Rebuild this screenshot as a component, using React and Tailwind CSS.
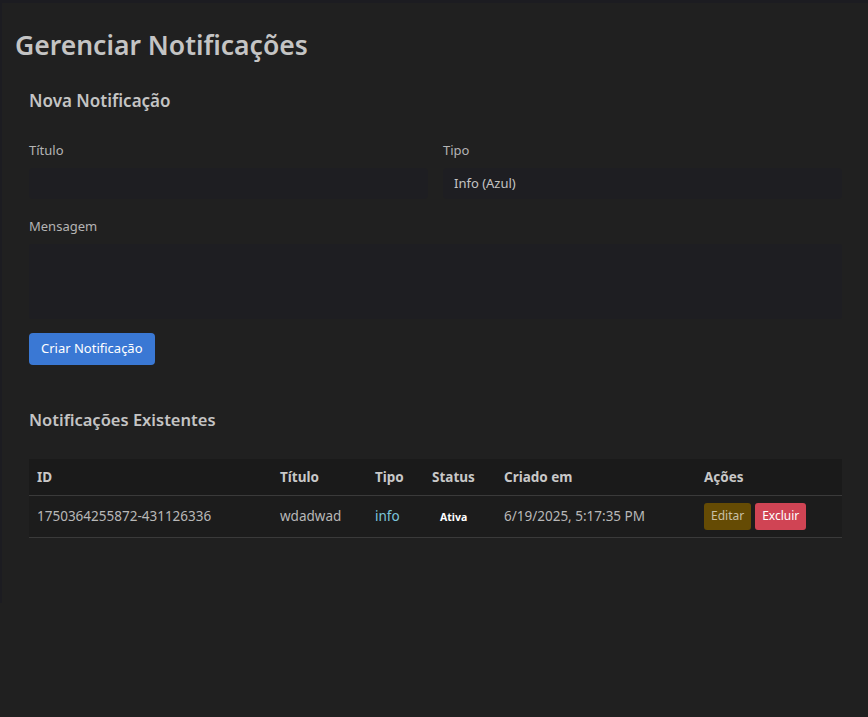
import { useState } from 'react'

const notifications = [
  {
    id: '1750364255872-431126336',
    title: 'wdadwad',
    type: 'info',
    active: true,
    createdAt: '6/19/2025, 5:17:35 PM',
  },
]

export default function App() {
  const [title, setTitle] = useState('')
  const [type, setType] = useState('info')
  const [message, setMessage] = useState('')

  return (
    <div
      className="min-h-[717px] bg-[#202020] text-[#c4c4c4]"
      style={{ fontFamily: '"Noto Sans", "Open Sans", sans-serif' }}
    >
      <div className="h-[3px] bg-[#1c1c21]" />
      <div className="h-[600px] border-l-2 border-[#1c1c21] pl-[13px] pr-[12px]">
        <h1 className="pt-[24px] text-[26.5px] leading-[36px] font-semibold text-[#c4c4c4]">
          Gerenciar Notificações
        </h1>

        <section className="px-[14px] pt-[25px]">
          <h2 className="text-[17px] leading-[26px] font-semibold text-[#c4c4c4]">
            Nova Notificação
          </h2>

          <div className="mt-[26px] grid grid-cols-2 gap-[15px]">
            <label className="block">
              <span className="block text-[13px] leading-[20px] text-[#b4b4b4]">Título</span>
              <input
                type="text"
                value={title}
                onChange={(e) => setTitle(e.target.value)}
                className="mt-[8px] block h-[31px] w-full rounded-[4px] bg-[#1e1e22] px-[11px] text-[13px] text-[#c4c4c4] outline-none"
              />
            </label>
            <label className="block">
              <span className="block text-[13px] leading-[20px] text-[#b4b4b4]">Tipo</span>
              <select
                value={type}
                onChange={(e) => setType(e.target.value)}
                className="mt-[8px] block h-[31px] w-full appearance-none rounded-[4px] bg-[#1e1e22] px-[11px] text-[13px] text-[#c4c4c4] outline-none"
              >
                <option value="info">Info (Azul)</option>
                <option value="warning">Aviso (Amarelo)</option>
                <option value="error">Erro (Vermelho)</option>
              </select>
            </label>
          </div>

          <label className="mt-[17px] block">
            <span className="block text-[13px] leading-[20px] text-[#b4b4b4]">Mensagem</span>
            <textarea
              value={message}
              onChange={(e) => setMessage(e.target.value)}
              className="mt-[8px] block h-[75px] w-full resize-none rounded-[2px] bg-[#1e1e22] px-[11px] py-[6px] text-[13px] text-[#c4c4c4] outline-none"
            />
          </label>

          <button
            type="button"
            className="mt-[14px] h-[32px] rounded-[4px] bg-[#3a78d4] px-[12px] text-[13px] text-white"
          >
            Criar Notificação
          </button>

          <h2 className="mt-[42px] text-[16.5px] leading-[26px] font-semibold text-[#c4c4c4]">
            Notificações Existentes
          </h2>

          <table className="mt-[26px] w-full border-collapse text-[13.5px]">
            <thead>
              <tr className="bg-[#1a1a1a] text-left text-[#c8c8c8]">
                <th className="h-[36px] w-[243px] border-b border-[#3a3a3a] px-[8px] font-bold">ID</th>
                <th className="w-[95px] border-b border-[#3a3a3a] px-[8px] font-bold">Título</th>
                <th className="w-[57px] border-b border-[#3a3a3a] px-[8px] font-bold">Tipo</th>
                <th className="w-[72px] border-b border-[#3a3a3a] px-[8px] font-bold">Status</th>
                <th className="w-[200px] border-b border-[#3a3a3a] px-[8px] font-bold">Criado em</th>
                <th className="border-b border-[#3a3a3a] px-[8px] font-bold">Ações</th>
              </tr>
            </thead>
            <tbody>
              {notifications.map((n) => (
                <tr key={n.id} className="bg-[#1c1c1c] text-[#b8b8b8]">
                  <td className="h-[42px] border-b border-[#3a3a3a] px-[8px]">{n.id}</td>
                  <td className="border-b border-[#3a3a3a] px-[8px]">{n.title}</td>
                  <td className="border-b border-[#3a3a3a] px-[8px] text-[#7cc6dc]">{n.type}</td>
                  <td className="border-b border-[#3a3a3a] px-[8px]">
                    <span className="px-[8px] text-[10.5px] font-bold text-white">
                      {n.active ? 'Ativa' : 'Inativa'}
                    </span>
                  </td>
                  <td className="border-b border-[#3a3a3a] px-[8px]">{n.createdAt}</td>
                  <td className="border-b border-[#3a3a3a] px-[8px]">
                    <div className="flex gap-[4px]">
                      <button
                        type="button"
                        className="h-[27px] rounded-[3px] bg-[#654b04] px-[7px] text-[12px] text-[#c9c0a8]"
                      >
                        Editar
                      </button>
                      <button
                        type="button"
                        className="h-[27px] rounded-[3px] bg-[#d04454] px-[7px] text-[12px] text-white"
                      >
                        Excluir
                      </button>
                    </div>
                  </td>
                </tr>
              ))}
            </tbody>
          </table>
        </section>
      </div>
    </div>
  )
}
